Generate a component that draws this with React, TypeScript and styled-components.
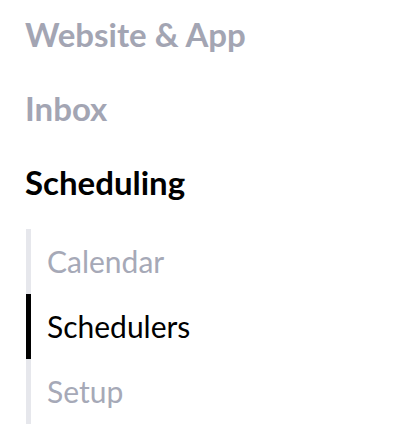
import styled, { createGlobalStyle } from 'styled-components';

const GlobalStyle = createGlobalStyle`
  body {
    margin: 0;
    background: #fff;
    font-family: Lato, 'Liberation Sans', sans-serif;
  }
`;

const sections = [
  { label: 'Website & App', active: false },
  { label: 'Inbox', active: false },
  { label: 'Scheduling', active: true },
];

const subItems = [
  { label: 'Calendar', active: false },
  { label: 'Schedulers', active: true },
  { label: 'Setup', active: false },
];

const App = () => {
  return (
    <Nav>
      <GlobalStyle />
      <Sections>
        {sections.map(section => (
          <SectionTitle key={section.label} $active={section.active}>
            {section.label}
          </SectionTitle>
        ))}
      </Sections>
      <SubList>
        {subItems.map(item => (
          <SubItem key={item.label} $active={item.active}>
            {item.label}
          </SubItem>
        ))}
      </SubList>
    </Nav>
  );
};

export default App;

const Nav = styled.nav`
  display: flex;
  flex-direction: column;
  padding: 14px 0 0 25px;
  width: 400px;
  height: 432px;
  box-sizing: border-box;
`;

const Sections = styled.div`
  display: flex;
  flex-direction: column;
  gap: 34px;
`;

const SectionTitle = styled.div<{ $active: boolean }>`
  font-size: 33px;
  font-weight: 700;
  line-height: 40px;
  color: ${({ $active }) => ($active ? '#000' : '#a3a5b3')};
`;

const SubList = styled.div`
  display: flex;
  flex-direction: column;
  margin-top: 27px;
  margin-left: 1px;
`;

const SubItem = styled.div<{ $active: boolean }>`
  height: 65px;
  box-sizing: border-box;
  padding: 4px 0 0 16px;
  line-height: 56px;
  border-left: 5px solid ${({ $active }) => ($active ? '#000' : '#e6e7ec')};
  font-size: 30px;
  color: ${({ $active }) => ($active ? '#000' : '#a6a9b7')};
`;
